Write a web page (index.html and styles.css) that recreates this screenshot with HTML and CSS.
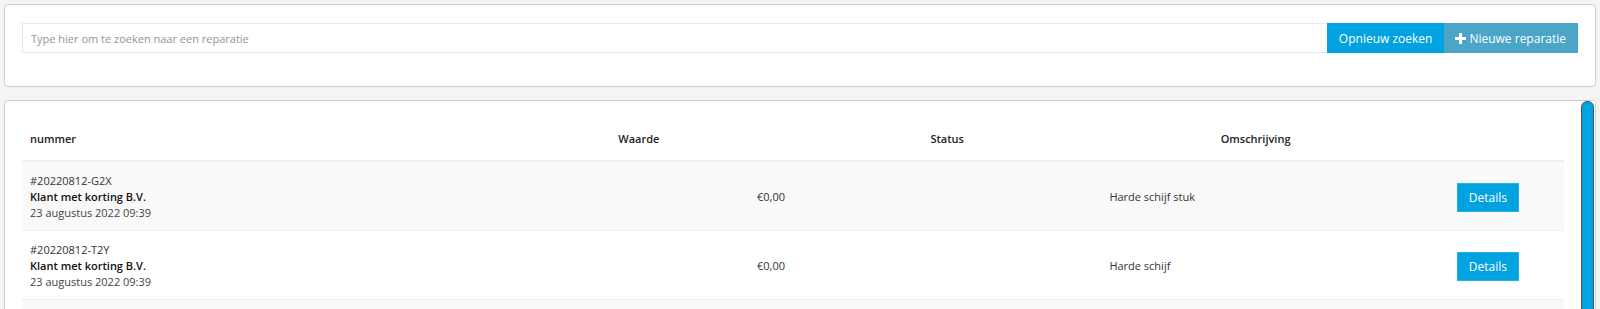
FILE: index.html
```html
<html>
<head>
    <title>Reparaties</title>
    <link rel="stylesheet" href="styles.css">
</head>
<body>
    <div class="card search-card">
        <div class="search-group">
            <input type="text" class="search-input" placeholder="Type hier om te zoeken naar een reparatie">
            <button class="btn btn-primary">Opnieuw zoeken</button>
            <button class="btn btn-info">
                <svg class="icon-plus" width="11" height="11" viewBox="0 0 11 11"><path d="M5.5 0v11M0 5.5h11" stroke="#fff" stroke-width="3"/></svg>Nieuwe reparatie
            </button>
        </div>
    </div>

    <div class="card list-card">
        <div class="list-body">
            <div class="table-head">
                <div class="cell cell-first">nummer</div>
                <div class="cell">Waarde</div>
                <div class="cell">Status</div>
                <div class="cell">Omschrijving</div>
                <div class="cell"></div>
            </div>

            <div class="table-row">
                <div class="cell cell-first">
                    <div class="repair-id">#20220812-G2X</div>
                    <div class="repair-customer">Klant met korting B.V.</div>
                    <div class="repair-date">23 augustus 2022 09:39</div>
                </div>
                <div class="cell cell-value">€0,00</div>
                <div class="cell"></div>
                <div class="cell cell-desc">Harde schijf stuk</div>
                <div class="cell cell-action"><button class="btn btn-primary btn-details">Details</button></div>
            </div>

            <div class="table-row">
                <div class="cell cell-first">
                    <div class="repair-id">#20220812-T2Y</div>
                    <div class="repair-customer">Klant met korting B.V.</div>
                    <div class="repair-date">23 augustus 2022 09:39</div>
                </div>
                <div class="cell cell-value">€0,00</div>
                <div class="cell"></div>
                <div class="cell cell-desc">Harde schijf</div>
                <div class="cell cell-action"><button class="btn btn-primary btn-details">Details</button></div>
            </div>

            <div class="table-row">
                <div class="cell cell-first">
                    <div class="repair-id">#20220811-K7P</div>
                    <div class="repair-customer">Klant met korting B.V.</div>
                    <div class="repair-date">22 augustus 2022 14:12</div>
                </div>
                <div class="cell cell-value">€0,00</div>
                <div class="cell"></div>
                <div class="cell cell-desc">Scherm vervangen</div>
                <div class="cell cell-action"><button class="btn btn-primary btn-details">Details</button></div>
            </div>

            <div class="table-row">
                <div class="cell cell-first">
                    <div class="repair-id">#20220811-B4M</div>
                    <div class="repair-customer">Klant met korting B.V.</div>
                    <div class="repair-date">22 augustus 2022 10:05</div>
                </div>
                <div class="cell cell-value">€0,00</div>
                <div class="cell"></div>
                <div class="cell cell-desc">Accu defect</div>
                <div class="cell cell-action"><button class="btn btn-primary btn-details">Details</button></div>
            </div>
        </div>

        <!-- scrollbar of the list panel -->
        <div class="scroll-rail">
            <div class="scroll-thumb"></div>
        </div>
    </div>
</body>
</html>
```

FILE: styles.css
```css
body {
    font-family: 'Open Sans', 'Noto Sans', sans-serif;
    font-size: 11px;
    color: #333;
    background: #f4f4f4;
    margin: 4px;
}

.card {
    background: #fff;
    border: 1px solid #cfcfcf;
    border-radius: 4px;
}

.search-card {
    padding: 18px 17px 33px;
}

.search-group {
    display: flex;
    height: 30px;
}

.search-input {
    flex: 1;
    border: 1px solid #e2eaec;
    border-right: none;
    padding: 0 8px;
    font-family: inherit;
    font-size: 11px;
    color: #333;
    outline: none;
}

.search-input::placeholder {
    color: #959595;
}

.btn {
    border: 1px solid transparent;
    color: #fff;
    font-family: inherit;
    font-size: 12px;
    padding: 0 11px;
    cursor: pointer;
    display: flex;
    align-items: center;
    gap: 3px;
}

.btn-primary {
    background: #00a3e0;
    border-color: #00a3e0;
}

.btn-info {
    background: #4aa5c8;
    border-color: #4aa5c8;
    padding: 0 11px 0 10px;
}

.icon-plus {
    display: block;
}

.list-card {
    margin-top: 13px;
    display: flex;
    overflow: hidden;
}

.list-body {
    flex: 1;
    padding: 17px 17px 30px;
}

.scroll-rail {
    width: 13px;
    padding: 0 1px 0 0;
    background: #fff;
}

.scroll-thumb {
    height: 100%;
    background: #00a3e0;
    border: 1px solid #555;
    border-radius: 6px;
    box-sizing: border-box;
}

.table-head,
.table-row {
    display: grid;
    grid-template-columns: 30% 20% 20% 20% 10%;
}

.cell {
    padding: 0 8px;
}

.table-head {
    border-bottom: 2px solid #edf1f1;
}

.table-head .cell {
    padding-top: 12px;
    padding-bottom: 13px;
    line-height: 17px;
    font-weight: 600;
    color: #222;
    text-align: center;
}

.table-head .cell-first {
    text-align: left;
}

.table-row {
    line-height: 16px;
    border-bottom: 1px solid #eee;
}

.table-row:nth-child(even) {
    background: #f9f9f9;
}

.table-row .cell {
    padding-top: 11px;
    padding-bottom: 9px;
    display: flex;
    align-items: center;
}

.table-row .cell-first {
    display: block;
}

.repair-customer {
    font-weight: 600;
    color: #111;
}

.repair-date {
    color: #444;
}

.cell-value {
    justify-content: flex-end;
}

.cell-action {
    justify-content: center;
    padding-left: 10px;
}

.btn-details {
    height: 29px;
    padding: 0 11px;
    border-color: #26b0e6;
}
```
